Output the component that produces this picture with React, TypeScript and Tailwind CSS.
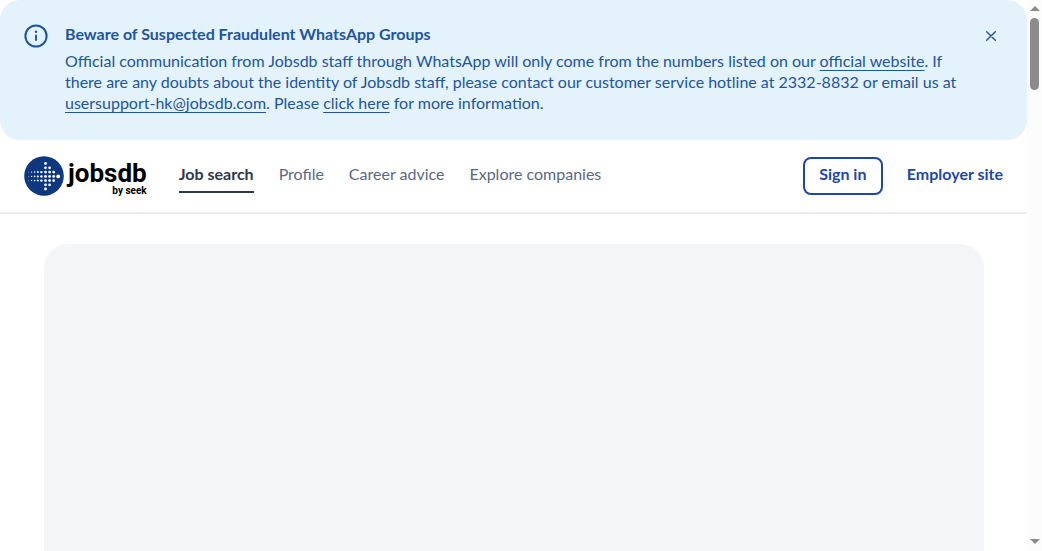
import { useState } from "react";

const dots: [number, number, number][] = [
  [21.5, 7.5, 1.4],
  [21.5, 11.8, 1.4], [25.6, 11.8, 1.4],
  [17.4, 16.1, 1.2], [21.5, 16.1, 1.4], [25.6, 16.1, 1.4], [29.7, 16.1, 1.4],
  [21.5, 20.4, 1.4], [25.6, 20.4, 1.4], [29.7, 20.4, 1.4], [34.2, 20.4, 1.9],
  [17.4, 20.4, 1.2],
  [17.4, 24.6, 1.2], [21.5, 24.6, 1.4], [25.6, 24.6, 1.4], [29.7, 24.6, 1.4],
  [21.5, 28.8, 1.4], [25.6, 28.8, 1.4],
  [21.5, 33, 1.4],
  [13.8, 16.1, 1], [10.6, 16.1, 0.8], [7.6, 16.1, 0.6], [4.8, 16.1, 0.45],
  [13.8, 20.4, 1], [10.6, 20.4, 0.8], [7.6, 20.4, 0.6], [4.8, 20.4, 0.45],
  [13.8, 24.6, 1], [10.6, 24.6, 0.8], [7.6, 24.6, 0.6], [4.8, 24.6, 0.45],
];

function Logo() {
  return (
    <a href="#home" aria-label="Jobsdb by seek" className="flex items-center gap-1 text-black">
      <svg viewBox="0 0 40 40" className="size-10" aria-hidden="true">
        <circle cx="20" cy="20" r="19.8" fill="#0d3880" />
        {dots.map(([x, y, r]) => (
          <circle key={`${x}-${y}`} cx={x} cy={y} r={r} fill="#fff" />
        ))}
      </svg>
      <span className="flex flex-col items-end pt-0.5 font-['Roboto',sans-serif] font-bold">
        <span className="text-[26px] leading-7">jobsdb</span>
        <span className="text-[10px] leading-2">by seek</span>
      </span>
    </a>
  );
}

function Notice({ onClose }: { onClose: () => void }) {
  const link = "underline decoration-1 underline-offset-[3px] [text-decoration-skip-ink:none]";
  return (
    <section className="flex items-start rounded-[20px] bg-[#e3f2fb] px-6 pt-6 pb-6 text-[#1e559c]">
      <svg viewBox="0 0 24 24" className="mr-[17px] size-6 shrink-0" fill="none" stroke="currentColor" strokeWidth="2" strokeLinecap="round" aria-hidden="true">
        <circle cx="12" cy="12" r="10.6" />
        <path d="M12 11.5v4.5" />
        <circle cx="12" cy="7.8" r="1.2" fill="currentColor" stroke="none" />
      </svg>
      <div className="flex-1 pr-4 pb-[3px]">
        <h2 className="pb-1.5 font-bold leading-5">Beware of Suspected Fraudulent WhatsApp Groups</h2>
        <p className="leading-[21px]">
          Official communication from Jobsdb staff through WhatsApp will only come from the numbers listed on our{" "}
          <a href="#website" className={link}>official website</a>. If there are any doubts about the identity of
          Jobsdb staff, please contact our customer service hotline at 2332-8832 or email us at{" "}
          <a href="mailto:usersupport-hk@jobsdb.com" className={link}>usersupport-hk@jobsdb.com</a>. Please{" "}
          <a href="#more" className={link}>click here</a> for more information.
        </p>
      </div>
      <button type="button" aria-label="Close" onClick={onClose} className="flex size-6 items-center justify-center">
        <svg viewBox="0 0 10 10" className="size-2.5" fill="none" stroke="currentColor" strokeWidth="1.4" strokeLinecap="round" aria-hidden="true">
          <path d="M.7.7l8.6 8.6M9.3.7L.7 9.3" />
        </svg>
      </button>
    </section>
  );
}

export default function App() {
  const [open, setOpen] = useState(true);
  return (
    <div className="flex h-screen overflow-hidden bg-white font-['Lato',sans-serif] text-base">
      <div className="min-w-0 flex-1">
        {open && <Notice onClose={() => setOpen(false)} />}
        <header className="flex items-center justify-between border-b-2 border-[#eaecf1] px-6 py-4">
          <div className="flex items-center gap-8">
            <Logo />
            <nav className="flex gap-[25px] leading-6 text-[#5a6881]">
              <a href="#search" className="border-b-2 border-[#2e3849] pt-[3px] pb-[5px] font-bold text-[#2e3849]">Job search</a>
              <a href="#profile" className="pt-[3px] pb-[5px]">Profile</a>
              <a href="#advice" className="pt-[3px] pb-[5px]">Career advice</a>
              <a href="#companies" className="pt-[3px] pb-[5px]">Explore companies</a>
            </nav>
          </div>
          <div className="flex items-center gap-6 font-bold text-[#1e47a9]">
            <a href="#signin" className="min-w-20 rounded-lg border-2 border-[#1e47a9] pt-[5px] pb-[9px] text-center leading-5">Sign in</a>
            <a href="#employer" className="pb-1">Employer site</a>
          </div>
        </header>
        <main className="mt-[30px] mr-[43px] ml-11 h-screen rounded-3xl bg-[#f3f5f7]" />
      </div>
      <div className="flex w-[15px] shrink-0 flex-col items-center justify-between bg-[#fcfcfc] pt-1.5 pb-[7px]" aria-hidden="true">
        <div className="flex flex-col items-center gap-[7px]">
          <svg viewBox="0 0 10 5" className="h-[5px] w-2.5"><path d="M5 0l5 5H0z" fill="#8b8b8b" /></svg>
          <div className="h-[72px] w-[9px] rounded-full bg-[#8b8b8b]" />
        </div>
        <svg viewBox="0 0 10 5" className="h-[5px] w-2.5"><path d="M5 5l5-5H0z" fill="#8b8b8b" /></svg>
      </div>
    </div>
  );
}
